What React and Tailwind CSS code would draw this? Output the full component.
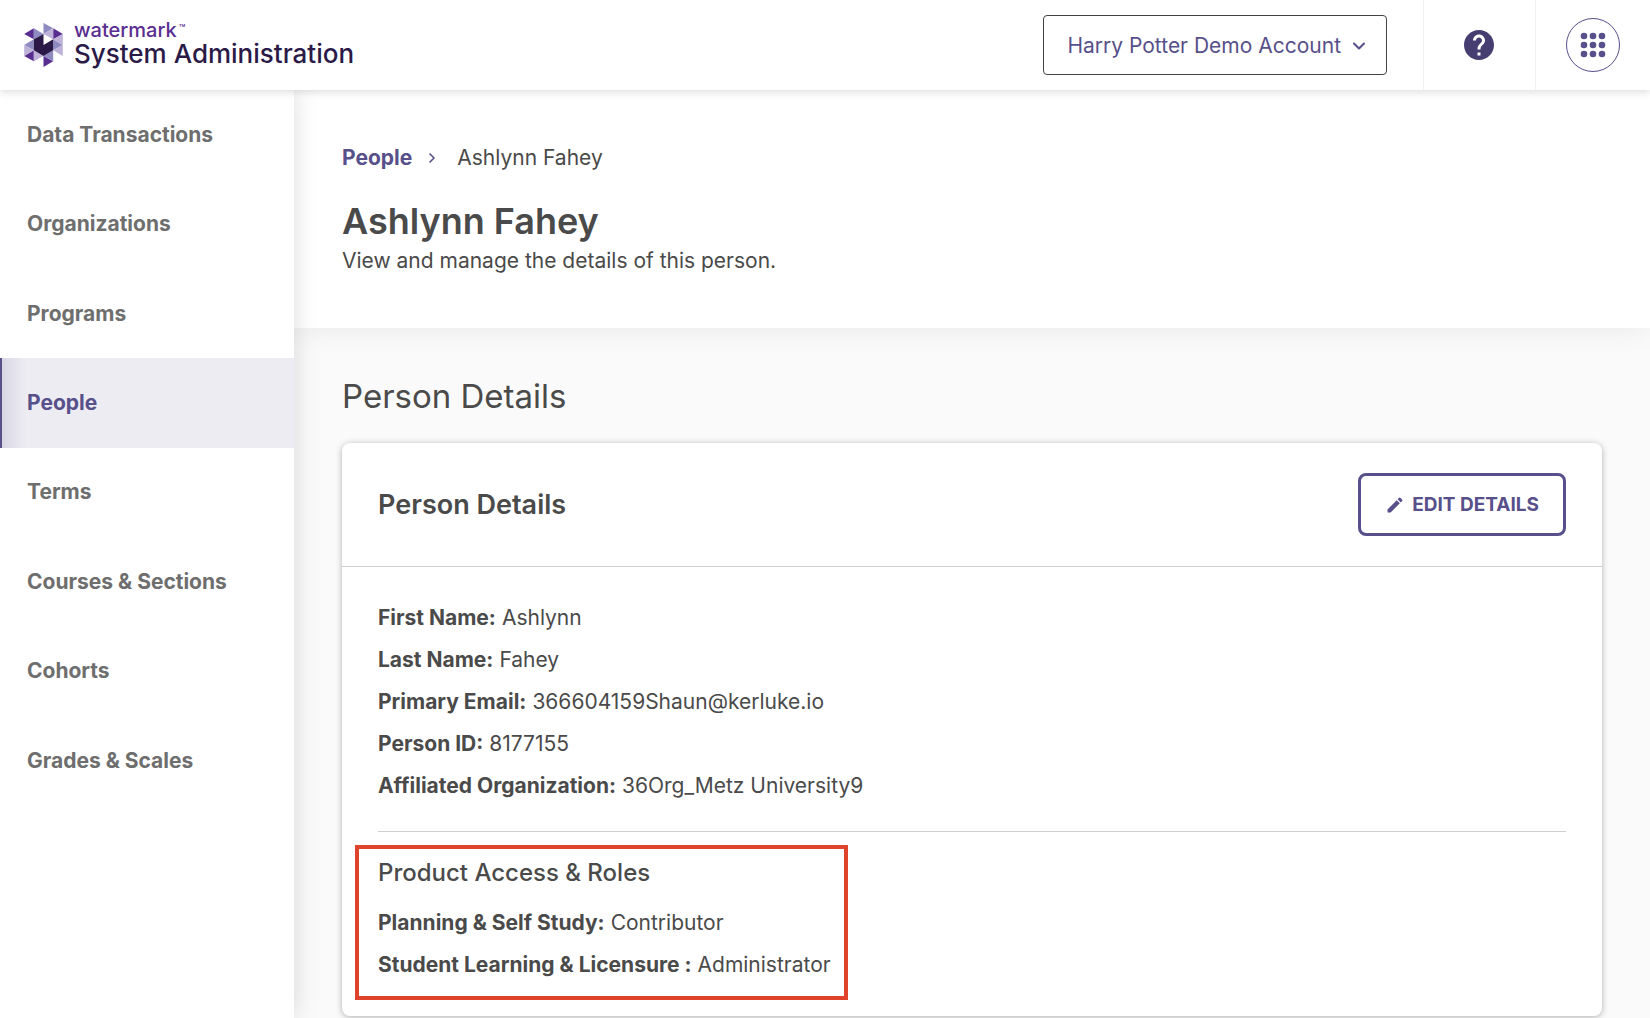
import { ChevronDown, ChevronRight } from "lucide-react";
import { MdEdit, MdHelp } from "react-icons/md";

const navItems = [
  "Data Transactions",
  "Organizations",
  "Programs",
  "People",
  "Terms",
  "Courses & Sections",
  "Cohorts",
  "Grades & Scales",
];

const details = [
  ["First Name:", "Ashlynn"],
  ["Last Name:", "Fahey"],
  ["Primary Email:", "366604159Shaun@kerluke.io"],
  ["Person ID:", "8177155"],
  ["Affiliated Organization:", "36Org_Metz University9"],
];

const roles = [
  ["Planning & Self Study:", "Contributor"],
  ["Student Learning & Licensure :", "Administrator"],
];

function LogoMark() {
  return (
    <svg viewBox="28 25 116 132" className="h-11 w-[39px]" aria-hidden="true">
      <g fill="#5a2d91">
        <path d="M28 58 57 41V74Z" />
        <path d="M115 41 144 58 115 74Z" />
        <path d="M28 124 57 107V140Z" />
        <path d="M86 124 115 140 86 157Z" />
      </g>
      <g fill="#8e8bc0">
        <path d="M57 41 86 58 57 74Z" />
        <path d="M86 25 115 41 86 58Z" />
        <path d="M57 74V107L28 91Z" />
        <path d="M115 74 144 91 115 107Z" />
        <path d="M115 107V140L86 124Z" />
      </g>
      <g fill="#bfb2d8">
        <path d="M115 41V74L86 58Z" />
        <path d="M28 91 57 107 28 124Z" />
        <path d="M57 107 86 124 57 140Z" />
        <path d="M144 58V91L115 74Z" />
        <path d="M144 91V124L115 107Z" />
      </g>
      <path fill="#2b1a47" d="M57 74 86 58V91L115 74V107L86 124 57 107Z" />
    </svg>
  );
}

function AppsIcon() {
  const steps = [4, 13, 22];
  return (
    <svg viewBox="0 0 26 26" className="size-[26px]" fill="currentColor" aria-hidden="true">
      {steps.map((y) => steps.map((x) => <circle key={`${x}-${y}`} cx={x} cy={y} r="3.3" />))}
    </svg>
  );
}

function DetailList({ rows }) {
  return (
    <dl>
      {rows.map(([label, value]) => (
        <div key={label} className="flex gap-1.5 leading-[42px]">
          <dt className="font-bold">{label}</dt>
          <dd>{value}</dd>
        </div>
      ))}
    </dl>
  );
}

export default function App() {
  return (
    <div className="flex h-screen flex-col overflow-hidden bg-[#fafafa] font-['Inter',sans-serif] text-[21px] text-[#4a4a4a]">
      <header className="relative z-20 flex h-[90px] shrink-0 items-stretch bg-white shadow-[0_2px_8px_rgba(0,0,0,0.14)]">
        <a href="#home" className="flex items-center gap-[11px] pl-6 font-medium">
          <LogoMark />
          <span className="flex flex-col pb-1.5">
            <span className="flex items-start gap-0.5 text-[20px] leading-6 text-[#5a2d91]">
              watermark<span className="text-[11px] leading-5 font-normal">™</span>
            </span>
            <span className="text-[26px] leading-6 text-[#2b1a47]">System Administration</span>
          </span>
        </a>
        <div className="ml-auto flex items-center pr-9">
          <button type="button" className="flex h-[60px] items-center gap-2 rounded-[4px] border border-[#444] pt-0.5 pr-[17px] pl-[23px] text-[#57508a]">
            Harry Potter Demo Account
            <ChevronDown className="size-5" strokeWidth={2.5} />
          </button>
        </div>
        <div className="flex w-28 items-center justify-center border-l border-[#f1f1f1] pr-0.5">
          <button type="button" aria-label="Help" className="text-[#463e70]">
            <MdHelp className="size-9" />
          </button>
        </div>
        <div className="flex w-[115px] items-center justify-center border-l border-[#f1f1f1]">
          <button type="button" aria-label="Apps" className="flex size-[54px] items-center justify-center rounded-full border border-[#57508a] text-[#57508a]">
            <AppsIcon />
          </button>
        </div>
      </header>

      <div className="flex min-h-0 flex-1">
        <nav className="relative z-10 w-[294px] shrink-0 bg-white shadow-[0_0_24px_rgba(0,0,0,0.14)]">
          <ul className="grid min-h-[715px] auto-rows-fr">
            {navItems.map((item) => (
              <li key={item}>
                {item === "People" ? (
                  <a
                    href="#people"
                    aria-current="page"
                    className="flex h-full items-center border-l-2 border-[#57508a] bg-[#edecf2] bg-linear-to-r from-[#d9d6e5] to-[#edecf2] to-[24px] pl-[25px] font-bold text-[#57508a]"
                  >
                    {item}
                  </a>
                ) : (
                  <a href="#section" className="flex h-full items-center pl-[27px] font-bold text-[#6e6e6e]">
                    {item}
                  </a>
                )}
              </li>
            ))}
          </ul>
        </nav>

        <main className="min-w-0 flex-1">
          <div className="bg-white px-12 pt-[53px] pb-[52px] shadow-[0_4px_24px_rgba(0,0,0,0.06)]">
            <nav aria-label="Breadcrumb" className="flex items-center leading-[30px]">
              <a href="#people" className="font-bold text-[#57508a]">People</a>
              <ChevronRight className="mr-[17px] ml-3 size-4 text-[#57508a]" strokeWidth={2.5} />
              <span>Ashlynn Fahey</span>
            </nav>
            <h1 className="mt-[27px] text-[36px] leading-[42px] font-semibold">Ashlynn Fahey</h1>
            <p className="mt-1 leading-[30px]">View and manage the details of this person.</p>
          </div>

          <div className="px-12 pt-[46px]">
            <h2 className="text-[33px] leading-[44px]">Person Details</h2>
            <section className="mt-[25px] rounded-[8px] bg-white shadow-[0_1px_6px_rgba(0,0,0,0.3)]">
              <div className="flex items-center justify-between border-b border-[#cfcfcf] px-9 py-[30px]">
                <h3 className="pt-0.5 text-[27px] font-semibold">Person Details</h3>
                <button type="button" className="flex h-[63px] items-center gap-[7px] rounded-[8px] border-3 border-[#57508a] px-6 text-[19px] leading-6 font-bold text-[#57508a]">
                  <MdEdit className="size-5" />
                  EDIT DETAILS
                </button>
              </div>
              <div className="px-9 pt-[30px] pb-[30px]">
                <DetailList rows={details} />
                <hr className="mt-6 border-[#cfcfcf]" />
                <div className="relative mt-[23px] w-fit">
                  <div className="pointer-events-none absolute -top-2.5 -right-[17px] -bottom-[14px] -left-[23px] border-4 border-[#e0432b]" />
                  <h4 className="mb-[11px] text-[24px] leading-9 font-medium">Product Access &amp; Roles</h4>
                  <DetailList rows={roles} />
                </div>
              </div>
            </section>
          </div>
        </main>
      </div>
    </div>
  );
}
